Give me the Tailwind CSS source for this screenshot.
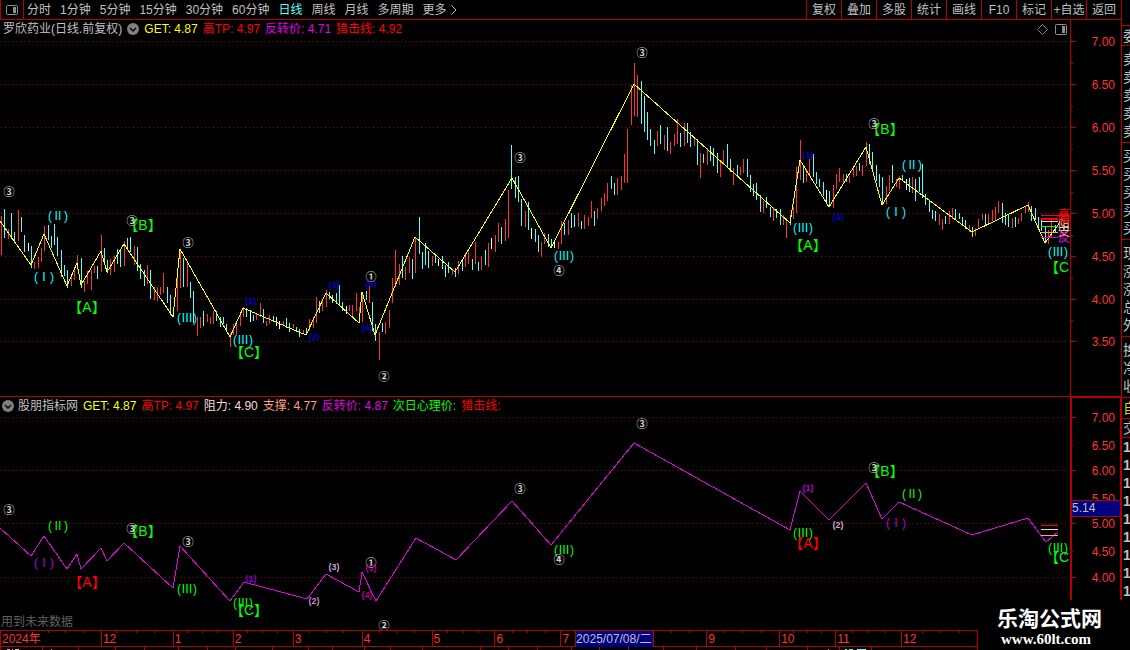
<!DOCTYPE html>
<html lang="zh-CN">
<head>
    <meta charset="UTF-8">
    <meta name="viewport" content="width=device-width, initial-scale=1.0">
    <title>罗欣药业 - 日线</title>
    <script src="https://cdn.jsdelivr.net/npm/@tailwindcss/browser@4"></script>
</head>
<body class="bg-black text-[#c0c0c0] text-[12px] leading-[18px] font-['Liberation_Sans','Noto_Sans_CJK_SC',sans-serif]">
    <div class="relative flex min-h-screen overflow-hidden">
        <div class="flex-1 min-w-0 flex flex-col">
            <!-- Toolbar -->
            <header class="flex h-5 border-b border-[#b40000] whitespace-nowrap">
                <button class="w-6 shrink-0 border-x border-[#b40000] flex items-center justify-center" aria-label="布局">
                    <svg width="12" height="10" viewBox="0 0 12 10" fill="none"><rect x=".5" y=".5" width="11" height="9" rx="1" stroke="#909090"/><path d="M7 2h3v6H7z" fill="#909090"/></svg>
                </button>
                <nav class="flex flex-1 gap-[9px] pl-[3px]">
                    <button>分时</button>
                    <button>1分钟</button>
                    <button>5分钟</button>
                    <button>15分钟</button>
                    <button>30分钟</button>
                    <button>60分钟</button>
                    <button class="text-[#54ffff]">日线</button>
                    <button>周线</button>
                    <button>月线</button>
                    <button>多周期</button>
                    <button class="flex items-center gap-1">更多 <svg width="6" height="10" viewBox="0 0 6 10" fill="none" stroke="#c0c0c0"><path d="M.5 .5L5 5L.5 9.5"/></svg></button>
                </nav>
                <div class="flex *:w-[35px] *:border-l *:border-[#b40000]">
                    <button>复权</button>
                    <button>叠加</button>
                    <button>多股</button>
                    <button>统计</button>
                    <button>画线</button>
                    <button>F10</button>
                    <button>标记</button>
                    <button>+自选</button>
                    <button>返回</button>
                </div>
            </header>

            <!-- Main chart -->
            <section class="relative">
                <div class="absolute left-[3px] top-0 flex items-center gap-[5px] whitespace-nowrap">
                    <h1>罗欣药业(日线.前复权)</h1>
                    <svg width="12" height="12" viewBox="0 0 12 12"><circle cx="6" cy="6" r="6" fill="#808080"/><path d="M3 5l3 3l3-3" fill="none" stroke="#000" stroke-width="1.4"/></svg>
                    <span class="text-[#ffff00]">GET: 4.87</span>
                    <span class="text-[#ff0000]">高TP: 4.97</span>
                    <span class="text-[#e000e0]">反转价: 4.71</span>
                    <span class="text-[#ff0000]">猎击线: 4.92</span>
                </div>
                <svg class="block w-full" viewBox="0 20 1121 376">
                    <g stroke="#a00000" stroke-dasharray="1 3" shape-rendering="crispEdges">
                        <path d="M1 41.5H1068M1 84.5H1068M1 127.5H1068M1 170.5H1068M1 213.5H1068M1 256.5H1068M1 299.5H1068M1 341.5H1068"/>
                    </g>
                    <path d="M1070.5 20V396M1070 41.5h6M1070 84.5h6M1070 127.5h6M1070 170.5h6M1070 213.5h6M1070 256.5h6M1070 299.5h6M1070 341.5h6M1070 63.5h3M1070 106.5h3M1070 149.5h3M1070 192.5h3M1070 235.5h3M1070 278.5h3M1070 320.5h3" stroke="#b40000" shape-rendering="crispEdges"/>
                    <path d="M1042.500 24.500l5 5l-5 5l-5-5z" fill="none" stroke="#808080"/>
                    <rect x="1055.500" y="24.500" width="11" height="10" rx="1" fill="none" stroke="#909090"/>
                    <path d="M1062 26h3v7h-3z" fill="#909090"/>
                    <g fill="none" shape-rendering="crispEdges">
                        <path id="upBars" stroke="#ff3232"/>
                        <path id="downBars" stroke="#54ffff"/>
                        <path id="flatBars" stroke="#ffffff"/>
                        <polyline stroke="#ffff00" points="0,221 31,265 44,234 67,286 77,263 81,285 101,251 107,272 124,244 173,317 180,249 230,337 243,308 306,335 326,293 359,323 362,292 375,335 415,237 455,272 512,178 551,248 634,84 790,223 800,160 829,207 866,147 882,205 899,178 972,232 1028,205 1045,243 1060,222"/>
                        <path stroke="#ff0000" d="M1041 215.500H1069M1041 218.500H1058M1041 219.500H1058"/>
                        <path stroke="#ffd0d0" d="M1041 221.500H1058"/>
                        <path stroke="#00ff00" d="M1041 226.500H1058"/>
                        <path stroke="#ffa080" d="M1041 232.500H1058"/>
                        <path stroke="#d800d8" d="M1041 237.500H1058"/>
                    </g>
                    <g id="mainLabels" text-anchor="middle" dominant-baseline="central"></g>
                    <g id="mainPrices" fill="#ff3232" font-size="12" text-anchor="end"></g>
                </svg>
            </section>

            <!-- Indicator chart -->
            <section class="relative">
                <div class="absolute left-[2px] top-px flex items-center gap-[5px] whitespace-nowrap">
                    <svg width="12" height="12" viewBox="0 0 12 12"><circle cx="6" cy="6" r="6" fill="#808080"/><path d="M3 5l3 3l3-3" fill="none" stroke="#000" stroke-width="1.4"/></svg>
                    <h2 class="-ml-px">股朋指标网</h2>
                    <span class="text-[#ffff00]">GET: 4.87</span>
                    <span class="text-[#ff0000]">高TP: 4.97</span>
                    <span class="text-[#ffd8d8]">阻力: 4.90</span>
                    <span class="text-[#ffa080]">支撑: 4.77</span>
                    <span class="text-[#e000e0]">反转价: 4.87</span>
                    <span class="text-[#00ff00]">次日心理价:</span>
                    <span class="text-[#ff0000]">猎击线:</span>
                </div>
                <p class="absolute left-px bottom-0 leading-4 text-[#606060]">用到未来数据</p>
                <svg class="block w-full" viewBox="0 396 1121 234">
                    <path d="M1 417.500H1068M1 470.500H1068M1 523.500H1068M1 577.500H1068" stroke="#a00000" stroke-dasharray="1 3" shape-rendering="crispEdges"/>
                    <g stroke="#b40000" fill="none" shape-rendering="crispEdges">
                        <path d="M0 396.500H1121M1072 417.500h4M1072 470.500h4M1072 523.500h4M1072 577.500h4M1072 445.500h1M1072 551.500h1"/>
                        <path d="M1071 600V397H1121V600" stroke-width="2"/>
                    </g>
                    <g fill="none" shape-rendering="crispEdges">
                        <polyline stroke="#e000e0" points="0,528 31,556 44,536 67,569 77,554 81,569 101,548 107,561 124,543 173,588 180,546 230,601 244,582 307,599 326,574 359,592 362,572 376,601 416,538 456,560 512,501 551,545 634,443 790,530 800,491 829,520 866,483 882,519 899,502 972,535 1028,518 1046,542 1058,532"/>
                        <path stroke="#ff0000" d="M1041 525.500H1058"/>
                        <path stroke="#ffd0d0" d="M1041 529.500H1058"/>
                        <path stroke="#ffa080" d="M1041 535.500H1058"/>
                    </g>
                    <g id="subLabels" text-anchor="middle" dominant-baseline="central"></g>
                    <g id="subPrices" fill="#ff3232" font-size="12" text-anchor="end"></g>
                    <rect x="1072" y="500" width="48" height="16" fill="#000080"/>
                    <path d="M1072 500.500H1120M1072 516.500H1120" stroke="#b40000" shape-rendering="crispEdges"/>
                    <text x="1072" y="512" font-size="12" fill="#c0c0c0">5.14</text>
                </svg>
            </section>

            <!-- Time axis -->
            <footer class="mr-[143px] text-[#ff3232]">
                <div class="relative">
                    <div class="grid grid-cols-[101fr_72fr_60fr_60fr_69fr_70fr_63fr_66fr_146fr_73fr_56fr_66fr_76fr] h-[17px] leading-4 border-y border-r border-[#b40000] *:min-w-0 *:border-l *:border-[#b40000] *:pl-px whitespace-nowrap">
                        <span>2024年</span>
                        <span>12</span>
                        <span>1</span>
                        <span>2</span>
                        <span>3</span>
                        <span>4</span>
                        <span>5</span>
                        <span>6</span>
                        <span class="flex gap-[6px]">7 <b class="font-normal bg-[#000080] text-[#c0c0c0] border-x border-[#b40000] w-[79px]">2025/07/08/二</b></span>
                        <span>9</span>
                        <span>10</span>
                        <span>11</span>
                        <span>12</span>
                    </div>
                    <svg class="absolute left-0 top-0 w-full h-[3px]" viewBox="0 0 978 3" preserveAspectRatio="none">
                        <path stroke="#b40000" shape-rendering="crispEdges" d="M48.500 0v3M65.500 0v3M83.500 0v3M117.500 0v3M136.500 0v3M154.500 0v3M187.500 0v3M202.500 0v3M217.500 0v3M247.500 0v3M262.500 0v3M277.500 0v3M309.500 0v3M326.500 0v3M343.500 0v3M379.500 0v3M397.500 0v3M414.500 0v3M447.500 0v3M463.500 0v3M478.500 0v3M512.500 0v3M527.500 0v3M545.500 0v3M671.500 0v3M689.500 0v3M723.500 0v3M742.500 0v3M761.500 0v3M793.500 0v3M807.500 0v3M821.500 0v3M852.500 0v3M868.500 0v3M885.500 0v3M922.500 0v3M940.500 0v3M959.500 0v3"/>
                    </svg>
                </div>
                <svg class="block w-full h-[3px]" viewBox="0 0 978 3" preserveAspectRatio="none" shape-rendering="crispEdges">
                    <path stroke="#b40000" d="M.5 0v3M42.500 0v3M78.500 0v3M115.500 0v3M144.500 0v3M178.500 0v3M207.500 0v3M235.500 0v3M272.500 0v3M308.500 0v3M332.500 0v3M364.500 0v3M390.500 0v3M422.500 0v3M480.500 0v3M508.500 0v3M537.500 0v3M571.500 0v3M599.500 0v3M628.500 0v3M663.500 0v3M696.500 0v3M735.500 0v3M766.500 0v3M807.500 0v3M839.500 0v3M871.500 0v3M977.500 0v3"/>
                    <path stroke="#c0c0c0" d="M7 2.500h3M12 2.500h1M15 2.500h4M51 2.500h1M828 2.500h1"/>
                    <path stroke="#54ffff" d="M845 2.500h2M849 2.500h4M857 2.500h9"/>
                </svg>
            </footer>
        </div>

        <!-- Quote panel, cut by the window edge -->
        <aside class="w-[9px] shrink-0 overflow-hidden border-l border-[#b40000] text-[14px] *:w-4 *:pl-px *:border-[#b40000]">
            <div class="h-[25px]"></div>
            <p class="h-5 leading-5 border-t">委</p>
            <div class="h-[97px] leading-[18px] border-t pt-1">卖<br>卖<br>卖<br>卖<br>卖</div>
            <div class="h-[97px] leading-[18px] border-t pt-1">买<br>买<br>买<br>买<br>买</div>
            <div class="h-[97px] leading-[18px] border-t pt-1">现<br>涨<br>涨<br>总<br>外</div>
            <div class="h-[61px] leading-[18px] border-t pt-1">换<br>净<br>收</div>
            <p class="h-[21px] leading-5 border-t text-[#d8d800]">自</p>
            <p class="h-[19px] leading-[18px] border-t">交</p>
            <div class="leading-[18px] border-t font-bold">1<br>1<br>1<br>1<br>1<br>1<br>1<br>1<br>1</div>
        </aside>

        <!-- Site mark -->
        <div class="absolute right-0 bottom-0 w-[152px] h-[50px] bg-black text-white font-bold text-center pr-[9px] pt-[7px]">
            <p class="text-[21px] leading-[24px]">乐淘公式网</p>
            <a href="#" class="block text-[15px] leading-4 pr-[7px] font-['Liberation_Serif',serif]">www.60lt.com</a>
        </div>
    </div>

    <script>
        // high-low bars: x,top,bottom
        const up = '1,216,255 8,229,239 18,210,241 34,262,269 38,257,268 41,248,262 44,226,251 71,275,286 74,268,280 77,255,270 84,281,292 87,271,284 91,270,290 94,266,273 101,235,272 110,259,275 114,256,272 124,241,266 134,246,265 147,265,284 154,287,300 157,287,301 160,287,295 163,273,293 177,273,311 180,251,288 187,262,287 197,317,336 200,317,328 207,314,322 210,317,324 213,311,324 230,333,347 233,324,335 236,324,335 240,313,326 243,307,317 256,313,320 260,303,317 266,321,326 269,315,324 283,321,326 293,324,328 303,330,334 309,319,331 313,317,328 316,297,323 322,299,311 326,290,307 349,305,311 352,305,316 356,293,311 359,307,320 362,293,322 369,286,303 379,332,360 385,322,334 389,310,328 392,278,303 395,250,287 399,264,285 405,267,280 409,257,273 415,237,273 432,256,266 452,269,275 458,261,274 465,253,267 468,252,264 475,242,264 481,256,270 488,243,267 495,235,252 498,223,242 505,219,241 508,190,238 525,211,227 541,242,257 544,233,244 558,242,249 561,221,244 568,220,235 578,213,227 584,215,229 588,217,226 591,201,218 597,208,219 601,198,211 604,193,206 607,183,201 617,178,195 621,176,190 624,154,183 627,129,183 631,85,125 634,63,116 637,75,117 657,131,146 664,135,150 670,142,154 674,134,146 677,119,144 684,123,146 694,137,146 700,153,178 707,148,165 720,160,177 723,150,165 733,168,185 740,167,175 743,159,173 763,201,213 773,207,221 783,215,225 786,218,238 793,207,219 796,167,213 800,140,180 806,169,182 809,159,175 833,185,208 836,174,189 839,168,182 843,174,184 849,176,183 853,167,177 856,166,176 862,165,176 866,142,166 886,186,204 889,175,191 896,179,187 899,176,189 912,177,193 939,214,225 942,219,230 949,211,224 952,208,219 969,225,232 975,228,236 978,219,229 982,214,220 988,214,225 992,210,221 995,207,221 998,201,213 1012,218,228 1018,218,224 1021,213,221 1025,206,213 1028,202,212 1048,230,244 1051,218,238';
        const down = '4,209,238 11,213,239 14,232,243 21,217,232 24,235,252 31,246,268 48,225,240 51,236,248 54,224,245 57,237,256 61,250,277 64,265,276 67,270,288 81,258,288 97,266,279 104,248,265 107,260,273 117,249,264 120,251,267 127,238,249 130,237,252 137,247,271 140,264,279 144,270,286 150,270,299 167,287,303 170,295,315 173,308,317 183,258,287 190,282,298 193,291,323 203,311,326 216,311,321 220,317,327 223,317,324 226,324,332 246,308,317 253,315,321 263,309,323 273,316,322 286,318,328 289,323,332 296,327,332 299,329,337 306,328,334 319,301,313 329,292,299 332,295,303 336,293,304 339,285,305 342,302,311 366,291,300 372,302,331 375,324,341 382,323,332 402,256,278 412,259,279 419,217,254 422,252,269 425,243,265 428,251,268 435,254,263 442,256,269 445,265,277 448,262,273 455,268,277 462,260,271 472,259,270 478,262,271 485,250,265 501,227,244 511,145,189 515,177,198 518,176,202 521,199,226 528,202,230 535,229,242 538,235,252 548,234,247 551,239,248 564,223,235 571,213,228 574,215,227 581,221,229 594,211,226 611,176,189 614,183,195 641,81,124 644,96,132 647,112,140 650,129,146 654,140,154 660,125,144 667,127,151 680,133,147 687,123,143 690,132,147 697,139,165 703,154,163 710,146,161 713,148,166 717,153,173 727,144,167 730,159,172 737,165,176 747,159,177 750,175,192 753,184,196 756,183,200 760,195,212 766,197,208 770,207,217 776,209,218 780,209,225 790,215,225 803,165,183 813,154,177 816,172,184 819,179,187 823,182,196 829,191,207 846,174,182 859,163,171 869,144,164 872,152,172 876,165,181 879,174,187 882,177,204 892,165,183 902,175,180 909,178,192 915,179,201 919,177,192 922,164,198 925,194,205 929,201,212 932,210,219 935,211,221 945,216,224 955,209,219 959,213,219 962,217,224 965,220,229 972,227,237 985,214,226 1002,203,223 1005,213,225 1008,214,227 1015,217,227 1031,206,221 1035,208,220 1038,217,230 1041,219,231 1045,227,243 1055,225,232';
        const flat = '28,243,251 250,310,322 276,317,326 279,321,329 346,306,314 438,259,266 491,238,249 531,228,239 554,240,248 826,190,202 906,179,190';

        function drawBars(id, list) {
            const d = list.split(' ').map(b => {
                const [x, top, bottom] = b.split(',');
                return `M${x}.5 ${top}V${bottom}`;
            }).join('');
            document.getElementById(id).setAttribute('d', d);
        }
        drawBars('upBars', up);
        drawBars('downBars', down);
        drawBars('flatBars', flat);

        // wave marks: text, x, y, colour, size; the small ones are bold
        function drawLabels(id, list) {
            document.getElementById(id).innerHTML = list.map(([t, x, y, c, s = 12]) =>
                `<text x="${x}" y="${y}" fill="${c}" font-size="${s}" font-weight="${s < 12 ? 700 : 400}">${t}</text>`).join('');
        }
        const cyan = '#00ffff', green = '#00ff00', gray = '#d0d0d0', blue = '#0000c8', red = '#ff0000', pink = '#e000e0';
        drawLabels('mainLabels', [
            ['(Ⅱ)', 58, 216, cyan], ['(Ⅰ)', 44, 277, cyan], ['(Ⅲ)', 187, 318, cyan], ['(Ⅲ)', 243, 340, cyan],
            ['(Ⅲ)', 564, 256, cyan], ['(Ⅲ)', 803, 228, cyan], ['(Ⅱ)', 912, 165, cyan], ['(Ⅰ)', 896, 212, cyan], ['(Ⅲ)', 1058, 252, cyan],
            ['【A】', 87, 307, green, 14], ['【B】', 143, 225, green, 14], ['【C】', 249, 352, green, 14],
            ['【B】', 885, 129, green, 14], ['【A】', 808, 245, green, 14], ['【C', 1057, 267, green, 14],
            ['(1)', 251, 301, blue, 9], ['(2)', 314, 337, blue, 9], ['(3)', 334, 285, blue, 9], ['(5)', 371, 284, blue, 9],
            ['(4)', 367, 328, blue, 9], ['(1)', 808, 155, blue, 9], ['(2)', 838, 217, blue, 9],
            ['③', 9, 192, gray, 11], ['③', 132, 221, gray, 11], ['③', 188, 243, gray, 11], ['①', 371, 277, gray, 11],
            ['②', 384, 377, gray, 11], ['③', 520, 158, gray, 11], ['④', 559, 271, gray, 11], ['③', 642, 53, gray, 11], ['③', 874, 124, gray, 11],
            ['反', 1064, 238, pink], ['支', 1064, 232, '#ffa080'], ['阻', 1064, 226, '#ffd0d0'], ['猎', 1064, 219, red], ['高', 1064, 215, red]
        ]);
        drawLabels('subLabels', [
            ['(Ⅱ)', 58, 526, green], ['(Ⅰ)', 44, 563, '#b400d8'], ['(Ⅲ)', 187, 589, green], ['(Ⅲ)', 243, 603, green],
            ['(Ⅲ)', 564, 550, green], ['(Ⅲ)', 803, 533, green], ['(Ⅱ)', 912, 494, green], ['(Ⅰ)', 896, 523, '#b400d8'], ['(Ⅲ)', 1058, 548, green],
            ['【A】', 87, 582, red, 14], ['【B】', 143, 531, green, 14], ['【C】', 249, 610, green, 14],
            ['【B】', 885, 471, green, 14], ['【A】', 808, 543, red, 14], ['【C', 1057, 557, green, 14],
            ['(1)', 251, 579, '#9000d8', 9], ['(2)', 314, 601, '#c890c0', 9], ['(3)', 334, 567, '#c8a0d8', 9], ['(5)', 371, 568, '#b0008c', 9],
            ['(4)', 367, 595, '#b0008c', 9], ['(1)', 808, 488, '#b400d8', 9], ['(2)', 838, 525, '#d8a0c8', 9],
            ['③', 9, 510, gray, 11], ['③', 132, 529, gray, 11], ['③', 188, 542, gray, 11], ['①', 371, 563, gray, 11],
            ['②', 384, 626, gray, 11], ['③', 520, 489, gray, 11], ['④', 559, 560, gray, 11], ['③', 642, 424, gray, 11], ['③', 874, 468, gray, 11]
        ]);

        function drawPrices(id, rows) {
            document.getElementById(id).innerHTML = rows.map((y, i) =>
                `<text x="1115" y="${y + 5}">${(7 - i / 2).toFixed(2)}</text>`).join('');
        }
        drawPrices('mainPrices', [41, 84, 127, 170, 213, 256, 299, 341]);
        drawPrices('subPrices', [417, 445, 470, 498, 523, 551, 577]);
    </script>
</body>
</html>
